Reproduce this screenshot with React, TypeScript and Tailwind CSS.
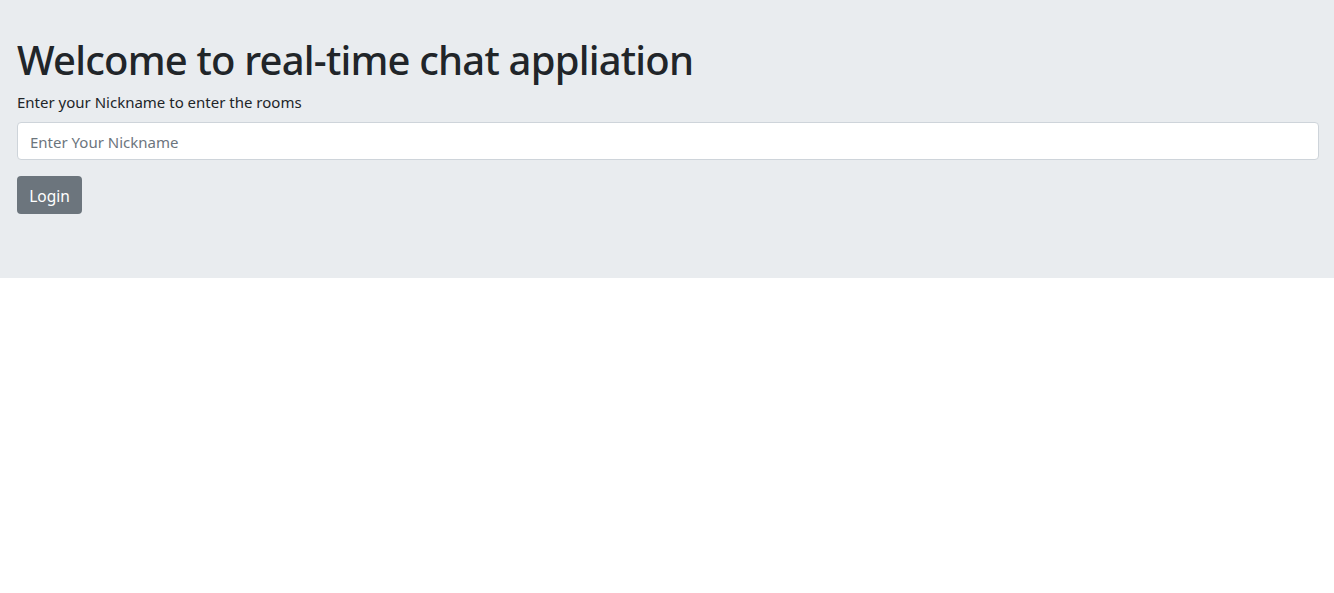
export default function App() {
  return (
    <div className="min-h-[593px] bg-white text-[#212529]" style={{ fontFamily: '"Noto Sans", "Open Sans", sans-serif' }}>
      <div className="h-[278px] bg-[#e9ecef] pt-[36px] pl-[17px] pr-[15px]">
        <h1 className="text-[40px] font-medium leading-[48px] mb-[6px] tracking-[-0.8px]">Welcome to real-time chat appliation</h1>
        <p className="text-[15px] leading-[24px] mb-[8px]">Enter your Nickname to enter the rooms</p>
        <input
          className="block w-full h-[38px] px-[12px] pt-[1px] bg-white border border-[#ced4da] rounded-[4px] text-[15px] placeholder:text-[#6c757d] outline-none"
          placeholder="Enter Your Nickname"
        />
        <button className="mt-[16px] h-[38px] w-[65px] pt-[3px] bg-[#6c757d] text-white rounded-[4px] text-[15.5px]">Login</button>
      </div>
    </div>
  );
}
